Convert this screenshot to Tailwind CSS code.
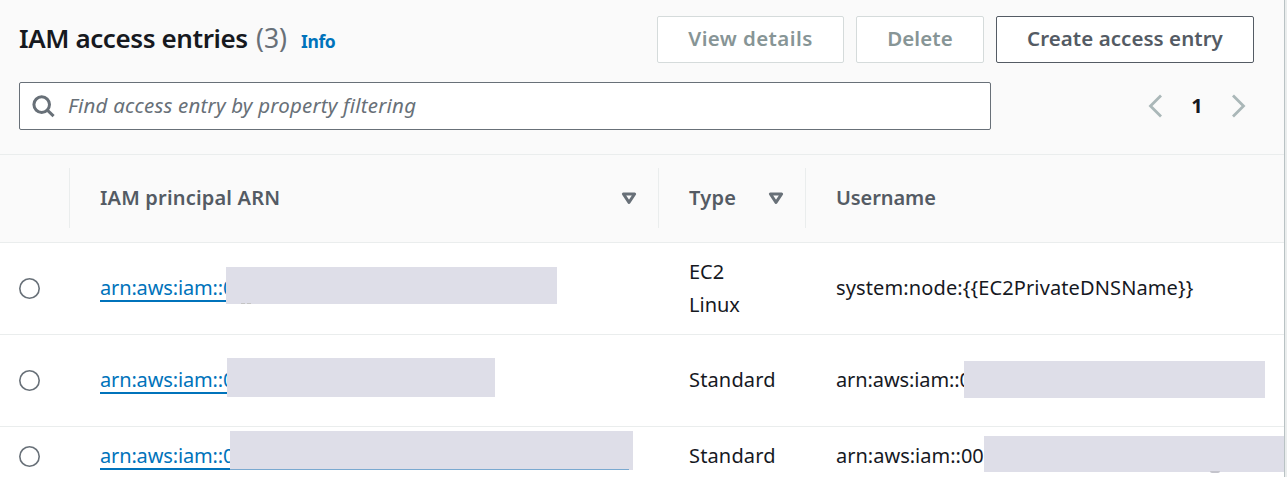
<!DOCTYPE html>
<html lang="en">
<head>
<meta charset="utf-8">
<title>IAM access entries</title>
<script src="https://cdn.jsdelivr.net/npm/@tailwindcss/browser@4"></script>
</head>
<body class="h-[477px] w-[1287px] overflow-hidden bg-[#eaeded] font-['Noto_Sans',sans-serif] text-[20px] text-[#16191f]">
<main class="flex h-[477px] w-[1285px] flex-col overflow-hidden border-r border-[#b9c2c4] bg-white">
  <header class="h-[155px] shrink-0 border-b border-[#eaeded] bg-[#fafafa] pt-4 pl-[19px]">
    <div class="flex h-[47px] items-start">
      <h1 class="flex w-[638px] items-baseline whitespace-nowrap text-[26px] leading-[44px]">
        <span class="w-[237px] font-semibold tracking-[-0.4px]">IAM access entries</span>
        <span class="w-[45px] text-[26.5px] text-[#687078]">(3)</span>
        <a class="text-[17.5px] font-bold tracking-[-0.4px] text-[#0073bb]">Info</a>
      </h1>
      <div class="flex gap-3 text-center text-[20.5px] font-semibold leading-[42px] whitespace-nowrap">
        <button class="h-[47px] w-[187px] rounded-[2px] border border-[#d5dbdb] bg-white pb-[3px] tracking-[0.4px] text-[#879596]">View details</button>
        <button class="h-[47px] w-[128px] rounded-[2px] border border-[#d5dbdb] bg-white pb-[3px] tracking-[0.1px] text-[#879596]">Delete</button>
        <button class="h-[47px] w-[258px] rounded-[2px] border border-[#545b64] bg-white pb-[3px] tracking-[0.05px] text-[#545b64]">Create access entry</button>
      </div>
    </div>
    <div class="mt-[19px] flex h-12 items-center">
      <div class="flex h-12 w-[972px] items-center rounded-[2px] border border-[#687078] bg-white pl-3">
        <svg class="h-6 w-6" viewBox="0 0 24 24" fill="none" stroke="#687078" stroke-width="3"><circle cx="9.7" cy="10.6" r="7.800"/><path d="M15.300 16.200l6.300 5.900"/></svg>
        <span class="ml-3 pb-0.5 text-[20.5px] leading-[44px] tracking-[0.2px] text-[#687078] italic whitespace-nowrap">Find access entry by property filtering</span>
      </div>
      <nav class="ml-[156px] flex items-center">
        <svg class="h-6 w-4" viewBox="0 0 16 24" fill="none" stroke="#aab7b8" stroke-width="2.8"><path d="M14 1.5L3.5 12 14 22.5"/></svg>
        <span class="w-[68px] text-center font-bold">1</span>
        <svg class="h-6 w-4" viewBox="0 0 16 24" fill="none" stroke="#aab7b8" stroke-width="2.8"><path d="M2 1.5L12.500 12 2 22.500"/></svg>
      </nav>
    </div>
  </header>
  <section class="flex h-[88px] shrink-0 border-b border-[#eaeded] bg-[#fafafa] pt-[13px] font-semibold leading-[60px] text-[#545b64] whitespace-nowrap">
    <div class="h-[60px] w-[70px] border-r border-[#eaeded]"></div>
    <div class="flex h-[60px] w-[589px] items-center justify-between border-r border-[#eaeded] pr-[21px] pl-[30px]"><span class="tracking-[0.18px]">IAM principal ARN</span>
      <svg class="h-4 w-4" viewBox="0 0 16 16" fill="none" stroke="#687078" stroke-width="3"><path d="M2.400 4h11.200L8 12.400z" stroke-linejoin="round"/></svg></div>
    <div class="flex h-[60px] w-[147px] items-center justify-between border-r border-[#eaeded] pr-[21px] pl-[30px]"><span class="tracking-[0.3px]">Type</span>
      <svg class="h-4 w-4" viewBox="0 0 16 16" fill="none" stroke="#687078" stroke-width="3"><path d="M2.400 4h11.200L8 12.400z" stroke-linejoin="round"/></svg></div>
    <div class="pl-[30px] tracking-[-0.1px]">Username</div>
  </section>
  <section class="relative flex h-[92px] shrink-0 items-center border-b border-[#eaeded] whitespace-nowrap">
    <div class="w-[100px] pl-[19px]"><svg class="block h-[21px] w-[21px]" viewBox="0 0 21 21"><circle cx="10.5" cy="10.5" r="9.700" fill="#fff" stroke="#687078" stroke-width="1.600"/></svg></div>
    <div class="w-[589px]"><a class="block h-[27px] w-[140px] border-b-2 border-[#0073bb] leading-[25px] tracking-[-0.15px] text-[#0073bb]">arn:aws:iam::0</a></div>
    <div class="w-[147px] pb-0.5 leading-[33px]">EC2<br>Linux</div>
    <div class="pb-0.5 tracking-[0.12px]">system:node:{{EC2PrivateDNSName}}</div>
    <div class="absolute top-6 left-[226px] h-[37px] w-[331px] bg-[#dedee8]"></div>
    <div class="absolute top-[60px] left-[241px] flex gap-0.5"><div class="h-px w-1 bg-[#c4c4c4]"></div><div class="h-px w-1 bg-[#c4c4c4]"></div></div>
  </section>
  <section class="relative flex h-[92px] shrink-0 items-center border-b border-[#eaeded] whitespace-nowrap">
    <div class="w-[100px] pl-[19px]"><svg class="block h-[21px] w-[21px]" viewBox="0 0 21 21"><circle cx="10.5" cy="10.5" r="9.700" fill="#fff" stroke="#687078" stroke-width="1.600"/></svg></div>
    <div class="w-[589px]"><a class="block h-[27px] w-[140px] border-b-2 border-[#0073bb] leading-[25px] tracking-[-0.15px] text-[#0073bb]">arn:aws:iam::0</a></div>
    <div class="w-[147px] pb-0.5 tracking-[0.15px]">Standard</div>
    <div class="pb-0.5 tracking-[-0.1px]">arn:aws:iam::0</div>
    <div class="absolute top-[23px] left-[227px] h-[39px] w-[268px] bg-[#dedee8]"></div>
    <div class="absolute top-[26px] left-[964px] h-[37px] w-[301px] bg-[#dedee8]"></div>
  </section>
  <section class="relative flex h-[59px] shrink-0 items-center whitespace-nowrap">
    <div class="w-[100px] pl-[19px]"><svg class="block h-[21px] w-[21px]" viewBox="0 0 21 21"><circle cx="10.5" cy="10.5" r="9.700" fill="#fff" stroke="#687078" stroke-width="1.600"/></svg></div>
    <div class="w-[589px]"><a class="block h-[27px] w-[130px] border-b-2 border-[#0073bb] leading-[25px] tracking-[-0.15px] text-[#0073bb]">arn:aws:iam::0</a></div>
    <div class="w-[147px] pb-0.5 tracking-[0.15px]">Standard</div>
    <div class="pb-0.5">arn:aws:iam::00</div>
    <div class="absolute top-[4px] left-[230px] h-[39px] w-[403px] bg-[#dedee8]"></div>
    <div class="absolute top-[42px] left-[230px] h-px w-[399px] bg-[#7aa9d0]"></div>
    <div class="absolute top-[9px] left-[984px] h-[36px] w-[301px] bg-[#dedee8]"></div>
    <div class="absolute top-[44px] left-[1210px] h-[2px] w-[10px] rounded-b-full bg-[#c4c4cc]"></div>
  </section>
</main>
</body>
</html>
